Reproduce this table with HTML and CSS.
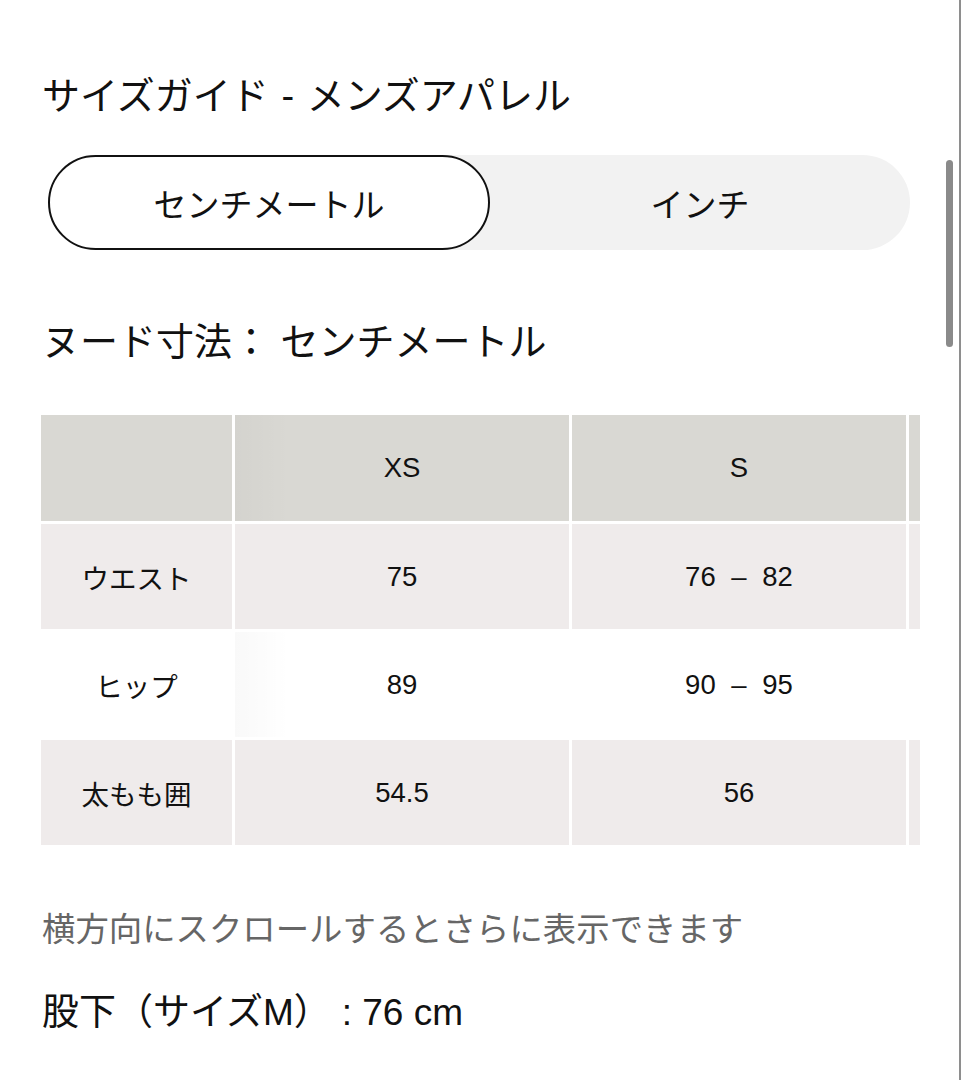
FILE: index.html
```html
<!DOCTYPE html>
<html lang="ja">
<head>
<meta charset="utf-8">
<title>サイズガイド - メンズアパレル</title>
<link rel="stylesheet" href="styles.css">
</head>
<body>
<div class="page">
  <h1 class="title">サイズガイド - メンズアパレル</h1>
  <div class="toggle">
    <button class="seg seg-active">センチメートル</button>
    <button class="seg">インチ</button>
  </div>
  <h2 class="subtitle">ヌード寸法： センチメートル</h2>
  <div class="table-scroll">
    <table class="size-table">
      <thead>
        <tr>
          <th class="c1"></th>
          <th class="c2">XS</th>
          <th>S</th>
          <th class="peek"></th>
        </tr>
      </thead>
      <tbody>
        <tr class="tinted">
          <th class="c1">ウエスト</th>
          <td class="c2">75</td>
          <td>76 – 82</td>
          <td class="peek"></td>
        </tr>
        <tr>
          <th class="c1">ヒップ</th>
          <td class="c2">89</td>
          <td>90 – 95</td>
          <td class="peek"></td>
        </tr>
        <tr class="tinted">
          <th class="c1">太もも囲</th>
          <td class="c2">54.5</td>
          <td>56</td>
          <td class="peek"></td>
        </tr>
      </tbody>
    </table>
  </div>
  <p class="hint">横方向にスクロールするとさらに表示できます</p>
  <p class="inseam">股下（サイズM）<span class="inseam-value">: 76 cm</span></p>
</div>
<div class="scrollbar"><div class="thumb"></div></div>
</body>
</html>
```

FILE: styles.css
```css
html, body {
  margin: 0;
  padding: 0;
  background: #ffffff;
}

body {
  font-family: "Liberation Sans", "Noto Sans CJK JP", sans-serif;
  color: #111111;
  overflow: hidden;
}

.page {
  width: 961px;
  height: 1080px;
  box-sizing: border-box;
  padding: 72px 0 0 42px;
}

.title {
  margin: 0;
  font-size: 38px;
  line-height: 48px;
  font-weight: 400;
  word-spacing: 2px;
}

.toggle {
  margin: 35px 0 0 6px;
  width: 862px;
  height: 95px;
  border-radius: 48px;
  background: #f2f2f2;
  display: grid;
  grid-template-columns: 442px 1fr;
}

.seg {
  font-family: inherit;
  font-size: 33px;
  color: #111111;
  border: 0;
  background: transparent;
  padding: 0;
  margin: 0;
  border-radius: 48px;
  cursor: pointer;
}

.seg-active {
  background: #ffffff;
  border: 2px solid #111111;
}

.subtitle {
  margin: 68px 0 0 0;
  font-size: 38px;
  line-height: 48px;
  font-weight: 400;
}

.table-scroll {
  margin: 49px 0 0 -1px;
  width: 879px;
  overflow: hidden;
}

.size-table {
  table-layout: fixed;
  width: 1206px;
  border-collapse: separate;
  border-spacing: 3px 3px;
  margin: -3px;
  font-size: 27.5px;
  color: #111111;
}

.size-table th,
.size-table td {
  width: 334px;
  height: 105px;
  padding: 0;
  text-align: center;
  vertical-align: middle;
  font-weight: 400;
  word-spacing: 8px;
}

.size-table .c1 {
  width: 191px;
}

.size-table thead th {
  height: 106px;
  background: #d9d8d3;
}

.size-table .tinted th,
.size-table .tinted td {
  background: #efebeb;
}

.size-table .c2 {
  background-image: linear-gradient(90deg, rgba(0, 0, 0, 0.025) 0, rgba(0, 0, 0, 0) 55px);
}

.hint {
  margin: 63px 0 0 0;
  font-size: 33.4px;
  line-height: 44px;
  color: #666666;
}

.inseam {
  margin: 39px 0 0 0;
  font-size: 37px;
  line-height: 44px;
  color: #111111;
}

.inseam-value {
  margin-left: 11px;
}

.scrollbar {
  position: fixed;
  top: 0;
  right: 0;
  width: 16px;
  height: 1080px;
  border-right: 2px solid #8e8e8e;
  box-sizing: border-box;
}

.thumb {
  position: absolute;
  left: 1px;
  top: 160px;
  width: 7px;
  height: 187px;
  border-radius: 4px;
  background: #8a8a8a;
}
```
